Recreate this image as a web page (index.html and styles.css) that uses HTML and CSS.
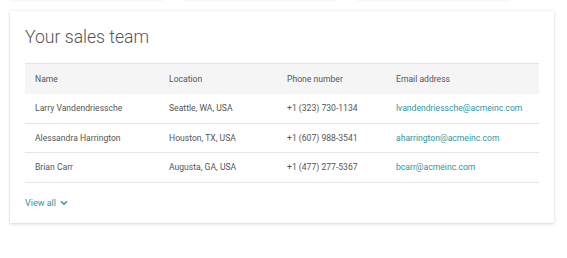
FILE: index.html
```html
<!DOCTYPE html>
<html lang="en">
<head>
<meta charset="utf-8">
<title>Your sales team</title>
<link rel="stylesheet" href="styles.css">
</head>
<body>
<div class="prev-row">
  <div class="prev-card"></div>
  <div class="prev-card"></div>
  <div class="prev-card"></div>
</div>
<section class="card">
  <h1 class="title">Your sales team</h1>
  <table class="team">
    <thead>
      <tr>
        <th class="c-name">Name</th>
        <th class="c-loc">Location</th>
        <th class="c-phone">Phone number</th>
        <th class="c-mail">Email address</th>
      </tr>
    </thead>
    <tbody>
      <tr>
        <td>Larry Vandendriessche</td>
        <td>Seattle, WA, USA</td>
        <td>+1 (323) 730-1134</td>
        <td><a class="mail" href="#">lvandendriessche@acmeinc.com</a></td>
      </tr>
      <tr>
        <td>Alessandra Harrington</td>
        <td>Houston, TX, USA</td>
        <td>+1 (607) 988-3541</td>
        <td><a class="mail" href="#">aharrington@acmeinc.com</a></td>
      </tr>
      <tr>
        <td>Brian Carr</td>
        <td>Augusta, GA, USA</td>
        <td>+1 (477) 277-5367</td>
        <td><a class="mail" href="#">bcarr@acmeinc.com</a></td>
      </tr>
    </tbody>
  </table>
  <a class="view-all" href="#">View all
    <svg class="chev" width="8" height="6" viewBox="0 0 8 6"><path d="M1 1.2 L4 4.2 L7 1.2" fill="none" stroke="currentColor" stroke-width="1.5"/></svg>
  </a>
</section>
</body>
</html>
```
FILE: styles.css
```css
html, body {
  margin: 0;
  padding: 0;
  background: #fff;
}
body {
  font-family: Roboto, "Liberation Sans", sans-serif;
  color: #555;
  width: 567px;
  height: 258px;
  overflow: hidden;
}
.prev-row {
  display: flex;
  gap: 20px;
  padding: 0 57px 0 10px;
  margin-top: -10px;
  height: 10px;
}
.prev-card {
  flex: 1;
  background: #fff;
  box-shadow: 0 1px 2px rgba(0,0,0,0.05);
}
.card {
  margin: 11px 13px 0 10px;
  background: #fff;
  box-shadow: 0 1px 3px rgba(0,0,0,0.16), 0 0 2px rgba(0,0,0,0.06);
  padding: 14px 15px 14px 15px;
  height: 184px;
  box-sizing: content-box;
}
.title {
  margin: 0;
  font-weight: 300;
  font-size: 17.6px;
  line-height: 24px;
  color: #555;
}
.team {
  margin-top: 14px;
  width: 514px;
  border-collapse: collapse;
  table-layout: fixed;
  font-size: 8.6px;
  color: #555;
}
.team th, .team td {
  text-align: left;
  font-weight: 400;
  padding: 0 0 0 10px;
  height: 28.5px;
  border-bottom: 1px solid #e6e6e6;
  white-space: nowrap;
}
.team thead th {
  background: #f5f5f5;
  border-top: 1px solid #e2e2e2;
  border-bottom: none;
  height: 30px;
}
.c-name { width: 124px; }
.c-loc { width: 108px; }
.c-phone { width: 99px; }
.c-mail { width: 143px; }
.mail {
  color: #2b95a3;
  text-decoration: none;
}
.view-all {
  display: inline-flex;
  align-items: center;
  gap: 4px;
  margin-top: 15px;
  font-size: 9px;
  color: #2b95a3;
  text-decoration: none;
}
.chev { display: block; }
```
